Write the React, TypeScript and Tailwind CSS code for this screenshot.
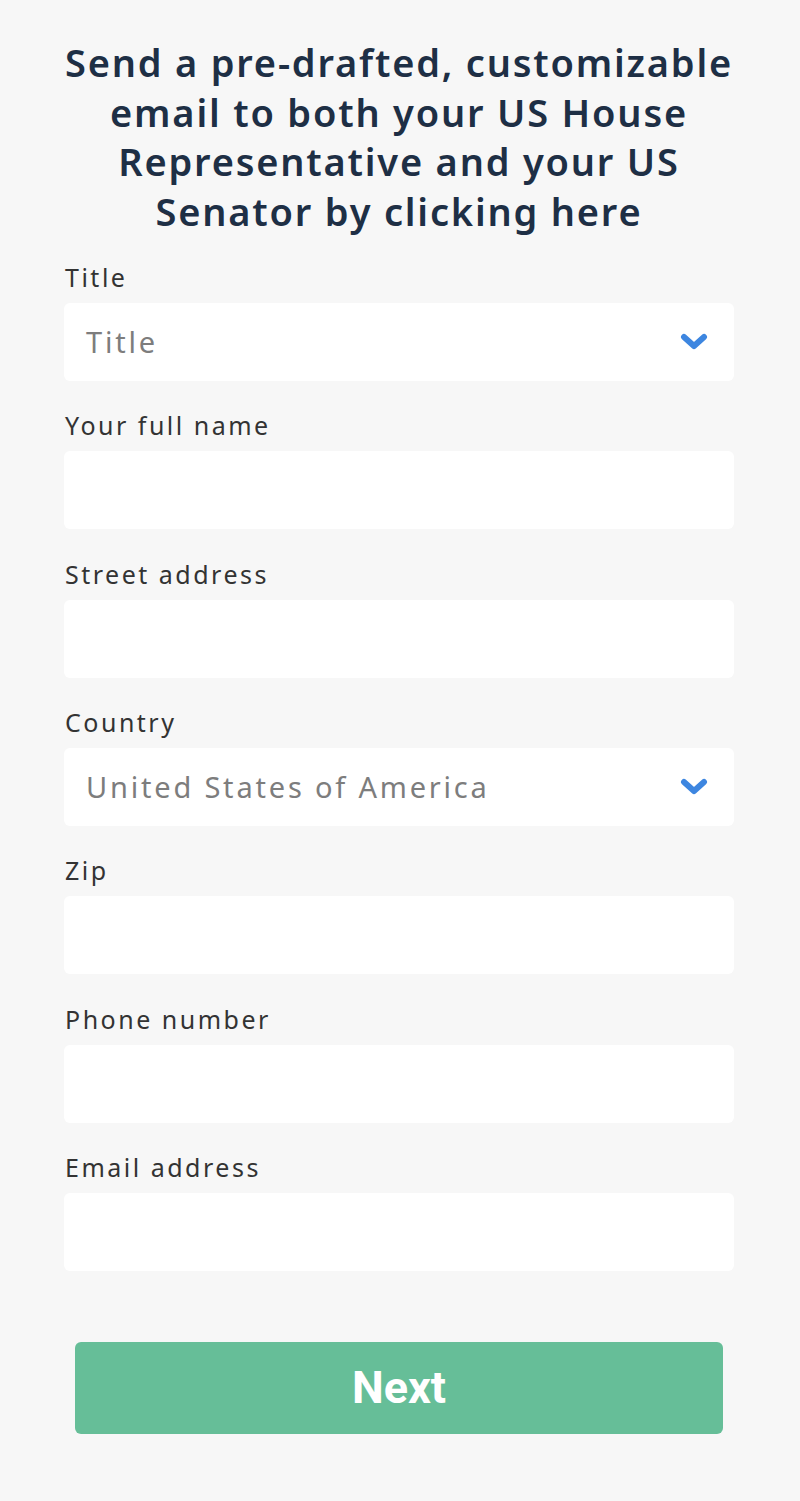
import React from 'react';

const fields = [
  { label: 'Title', select: true, value: 'Title' },
  { label: 'Your full name' },
  { label: 'Street address' },
  { label: 'Country', select: true, value: 'United States of America' },
  { label: 'Zip' },
  { label: 'Phone number' },
  { label: 'Email address' },
];

function Chevron() {
  return (
    <svg width="28" height="18" viewBox="0 0 28 18" className="shrink-0">
      <polyline
        points="4,4 14,13 24,4"
        fill="none"
        stroke="#3d86e0"
        strokeWidth="6"
        strokeLinecap="round"
        strokeLinejoin="round"
      />
    </svg>
  );
}

export default function App() {
  return (
    <div
      className="min-h-[1501px] bg-[#f7f7f7] pl-[64px] pr-[66px] pt-[38px]"
      style={{ fontFamily: '"Noto Sans", "Open Sans", sans-serif' }}
    >
      <h1 className="mx-auto max-w-[690px] text-center text-[38px] leading-[49.5px] font-semibold text-[#1e2f45] tracking-[1.8px]">
        Send a pre-drafted, customizable email to both your US House Representative and your US Senator by clicking here
      </h1>

      <form className="mt-[22px] flex flex-col gap-[25.35px]">
        {fields.map((f) => (
          <div key={f.label} className="flex flex-col gap-[7px]">
            <label className="text-[25px] leading-[38px] text-[#333] pl-[1px] tracking-[2.5px]">{f.label}</label>
            {f.select ? (
              <div className="h-[78px] bg-white rounded-[6px] flex items-center justify-between pl-[22px] pr-[26px]">
                <span className="text-[29px] text-[#7d7d7d] tracking-[2.8px]">{f.value}</span>
                <Chevron />
              </div>
            ) : (
              <input className="h-[78px] bg-white rounded-[6px] px-[22px] text-[29px] outline-none" />
            )}
          </div>
        ))}
      </form>

      <div className="px-[11px] pt-[71px]">
        <button
          type="button"
          className="w-full h-[92px] bg-[#66be98] rounded-[6px] text-white text-[45px] font-bold"
          style={{ fontFamily: 'Roboto, "Liberation Sans", sans-serif' }}
        >
          Next
        </button>
      </div>
    </div>
  );
}
